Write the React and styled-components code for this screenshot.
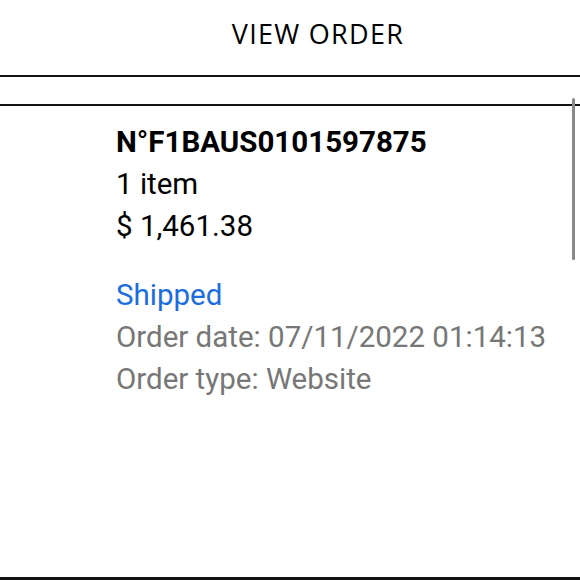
import React from "react";
import styled, { createGlobalStyle } from "styled-components";

const GlobalStyle = createGlobalStyle`
  html, body {
    margin: 0;
    padding: 0;
    background: #fff;
  }
  body {
    font-family: Roboto, "Liberation Sans", sans-serif;
    color: #000;
  }
`;

const Page = styled.div`
  width: 580px;
  height: 580px;
  display: flex;
  flex-direction: column;
  overflow: hidden;
`;

const Header = styled.header`
  height: 77px;
  display: flex;
  align-items: center;
  justify-content: center;
  padding-left: 56px;
  box-sizing: border-box;
  border-bottom: 2px solid #111;
`;

const Title = styled.h1`
  margin: 0;
  margin-top: -8px;
  font-family: "Open Sans", sans-serif;
  font-weight: 400;
  font-size: 27px;
  letter-spacing: 1.3px;
`;

const Spacer = styled.div`
  height: 27px;
  border-bottom: 2px solid #111;
`;

const Panel = styled.section`
  position: relative;
  flex: 1;
  padding: 15px 0 0 116px;
  border-bottom: 3px solid #111;
`;

const Thumb = styled.div`
  position: absolute;
  right: 5px;
  top: -8px;
  width: 3px;
  height: 162px;
  border-radius: 2px;
  background: #888;
`;

const Line = styled.div`
  font-size: 29.5px;
  line-height: 42px;
  font-weight: ${(p) => (p.$bold ? 700 : 400)};
  color: ${(p) => p.$color || "#000"};
  margin-top: ${(p) => p.$gap || 0}px;
`;

const App = () => (
  <Page>
    <GlobalStyle />
    <Header>
      <Title>VIEW ORDER</Title>
    </Header>
    <Spacer />
    <Panel>
      <Thumb />
      <Line $bold>N°F1BAUS0101597875</Line>
      <Line>1 item</Line>
      <Line>$ 1,461.38</Line>
      <Line $color="#1a6ee0" $gap={27}>Shipped</Line>
      <Line $color="#777">Order date: 07/11/2022 01:14:13</Line>
      <Line $color="#777">Order type: Website</Line>
    </Panel>
  </Page>
);

export default App;
